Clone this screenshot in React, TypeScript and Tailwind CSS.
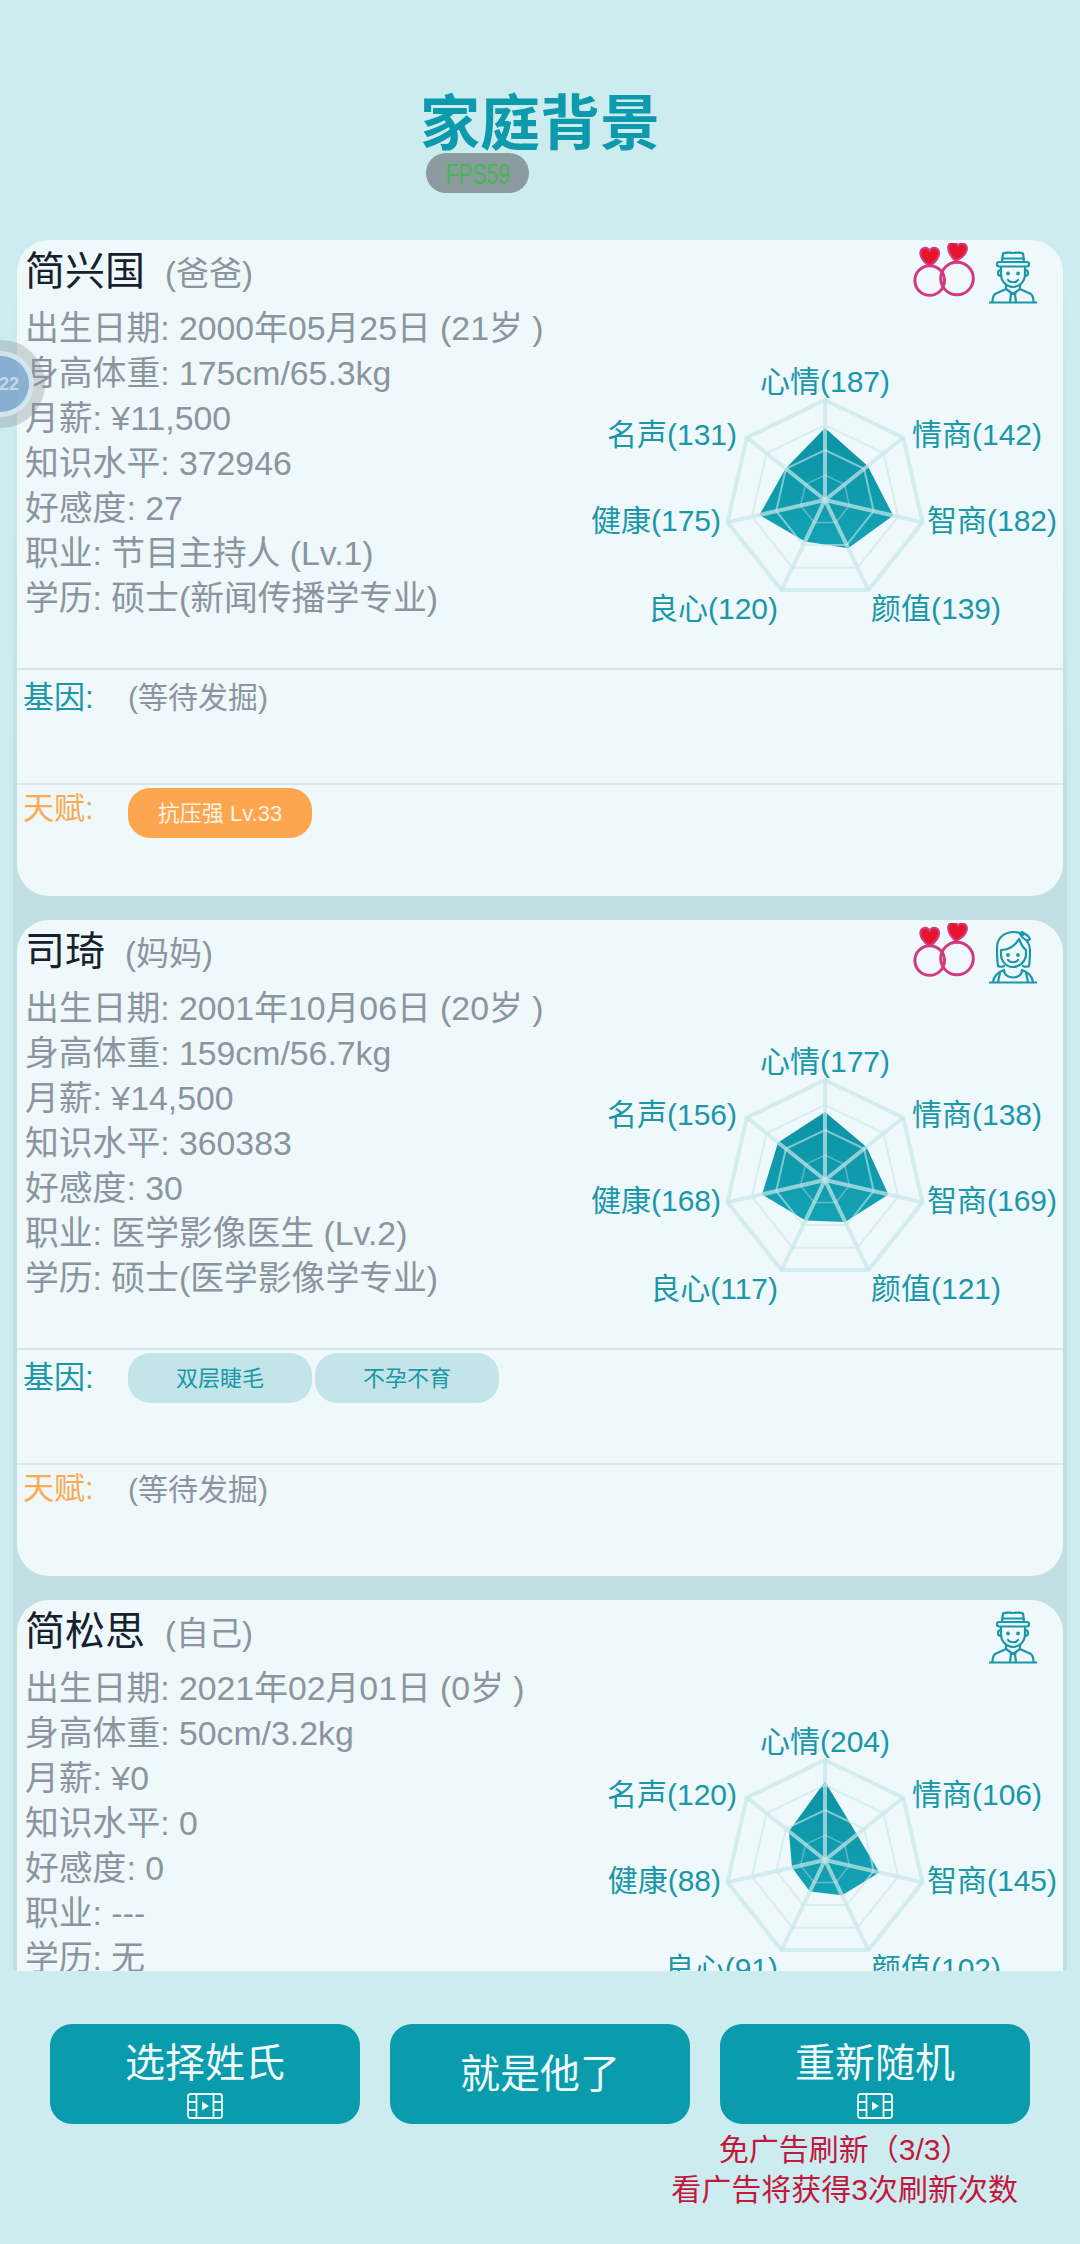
const FONT = 'font-["Liberation_Sans","Noto_Sans_CJK_SC",sans-serif]';

type Member = {
  name: string;
  role: string;
  rings: boolean;
  female?: boolean;
  info: string[];
  stats: number[];
  genes: string[];
  talents: string[];
};

// clockwise, starting from the top of the radar
const STAT_NAMES = ['心情', '情商', '智商', '颜值', '良心', '健康', '名声'];
const LABEL_POS: { x: number; y: number; anchor: 'middle' | 'start' | 'end' }[] = [
  { x: 0, y: -119, anchor: 'middle' },
  { x: 87, y: -66, anchor: 'start' },
  { x: 102, y: 20, anchor: 'start' },
  { x: 46, y: 108, anchor: 'start' },
  { x: -47, y: 108, anchor: 'end' },
  { x: -104, y: 20, anchor: 'end' },
  { x: -88, y: -66, anchor: 'end' },
];

const MEMBERS: Member[] = [
  {
    name: '简兴国',
    role: '(爸爸)',
    rings: true,
    info: ['出生日期: 2000年05月25日 (21岁 )', '身高体重: 175cm/65.3kg', '月薪: ¥11,500', '知识水平: 372946', '好感度: 27', '职业: 节目主持人 (Lv.1)', '学历: 硕士(新闻传播学专业)'],
    stats: [187, 142, 182, 139, 120, 175, 131],
    genes: [],
    talents: ['抗压强 Lv.33'],
  },
  {
    name: '司琦',
    role: '(妈妈)',
    rings: true,
    female: true,
    info: ['出生日期: 2001年10月06日 (20岁 )', '身高体重: 159cm/56.7kg', '月薪: ¥14,500', '知识水平: 360383', '好感度: 30', '职业: 医学影像医生 (Lv.2)', '学历: 硕士(医学影像学专业)'],
    stats: [177, 138, 169, 121, 117, 168, 156],
    genes: ['双层睫毛', '不孕不育'],
    talents: [],
  },
  {
    name: '简松思',
    role: '(自己)',
    rings: false,
    info: ['出生日期: 2021年02月01日 (0岁 )', '身高体重: 50cm/3.2kg', '月薪: ¥0', '知识水平: 0', '好感度: 0', '职业: ---', '学历: 无'],
    stats: [204, 106, 145, 102, 91, 88, 120],
    genes: [],
    talents: [],
  },
];

const point = (i: number, r: number) => {
  const a = ((-90 + (i * 360) / 7) * Math.PI) / 180;
  return `${(Math.cos(a) * r).toFixed(1)},${(Math.sin(a) * r).toFixed(1)}`;
};
const ring = (r: number) => STAT_NAMES.map((_, i) => point(i, r)).join(' ');

const Radar = ({ stats, id }: { stats: number[]; id: number }) => (
  <svg width="480" height="280" viewBox="-242 -140 480 280" className="shrink-0 mt-[120px] overflow-visible">
    <defs>
      <linearGradient id={`poly-${id}`} x1="0" y1="0" x2="0" y2="1">
        <stop offset="0%" stopColor="#0c93a5" />
        <stop offset="100%" stopColor="#13a2b4" />
      </linearGradient>
    </defs>
    <polygon points={stats.map((v, i) => point(i, (v / 260) * 100)).join(' ')} fill={`url(#poly-${id})`} />
    <polygon points={ring(25)} fill="none" stroke="#c7e7ea" strokeOpacity="0.4" strokeWidth="1.5" />
    <polygon points={ring(50)} fill="none" stroke="#c7e7ea" strokeOpacity="0.6" strokeWidth="2" />
    <polygon points={ring(75)} fill="none" stroke="#c7e7ea" strokeOpacity="0.6" strokeWidth="2" />
    <polygon points={ring(100)} fill="none" stroke="#c7e7ea" strokeOpacity="0.7" strokeWidth="4" />
    {STAT_NAMES.map((_, i) => {
      const [x, y] = point(i, 100).split(',');
      return <line key={i} x1="0" y1="0" x2={x} y2={y} stroke="#c7e7ea" strokeOpacity="0.7" strokeWidth="4" />;
    })}
    {STAT_NAMES.map((n, i) => (
      <text
        key={n}
        x={LABEL_POS[i].x}
        y={LABEL_POS[i].y}
        textAnchor={LABEL_POS[i].anchor}
        dominantBaseline="central"
        className="text-[30px] fill-[#1a97a8]"
      >
        {`${n}(${stats[i]})`}
      </text>
    ))}
  </svg>
);

const RingsIcon = () => {
  const heart = 'M0 7 C-10 0 -8 -7 -3.5 -7 C-1.5 -7 0 -5.5 0 -4 C0 -5.5 1.5 -7 3.5 -7 C8 -7 10 0 0 7 Z';
  return (
    <svg width="62" height="54" viewBox="0 0 62 54" fill="none">
      <circle cx="16.7" cy="37.5" r="14.8" stroke="#d23a80" strokeWidth="3" />
      <circle cx="44" cy="35.5" r="16.3" stroke="#d23a80" strokeWidth="3" />
      <path d={heart} transform="translate(16.7 14) scale(1.3)" fill="#e8142c" stroke="#d23a80" strokeWidth="1.6" />
      <path d={heart} transform="translate(44 9) rotate(8) scale(1.3)" fill="#e8142c" stroke="#d23a80" strokeWidth="1.6" />
    </svg>
  );
};

const MaleIcon = () => (
  <svg width="48" height="54" viewBox="0 0 48 54" fill="none" stroke="#1a97a8" strokeWidth="2.2" strokeLinecap="round" strokeLinejoin="round">
    <path d="M13 12 L14 3.5 C18 1.5 20 3 24 3 C28 3 30 1.5 34 3.5 L35 12" />
    <path d="M13 8.5 H35" />
    <rect x="8" y="12" width="32" height="4.5" rx="2.2" />
    <path d="M12 17 V24 C12 32 18 37 24 37 C30 37 36 32 36 24 V17" />
    <path d="M12 20 C8 20 8 26 12 26 M36 20 C40 20 40 26 36 26" />
    <path d="M19 30 C21 33 27 33 29 30" />
    <circle cx="19" cy="23.5" r="0.8" fill="#1a97a8" />
    <circle cx="29" cy="23.5" r="0.8" fill="#1a97a8" />
    <path d="M17 35 V39 L6 44 C4 46 3.5 49 3.5 52 M31 35 V39 L42 44 C44 46 44.5 49 44.5 52" />
    <path d="M17 39 L24 44 L31 39 M22 44 L21 52 M26 44 L27 52 M21.5 44 H26.5" />
    <path d="M0.5 52.5 H47.5" />
  </svg>
);

const FemaleIcon = () => (
  <svg width="48" height="54" viewBox="0 0 48 54" fill="none" stroke="#1a97a8" strokeWidth="2.2" strokeLinecap="round" strokeLinejoin="round">
    <path d="M9 36 C8 30 8 24 8 18 C8 8 15 2 25 2 C29 2 32 3 34 5 M38 11 C40 14 41 16 41 20 C41 26 41 30 40 36 C38 37 36 37 34 36" />
    <path d="M9 36 C11 37 13 37 15 36" />
    <path d="M12 20 C20 20 26 16 30 9 C32 14 34 18 37 20 V24 C37 31 31 37 24 37 C17 37 12 31 12 24 Z" />
    <path d="M33 2 L39 6 L41 9 L38 11 L33 7 L31 4 Z" />
    <path d="M19 30 C21 33 27 33 29 30" />
    <circle cx="19" cy="25" r="0.8" fill="#1a97a8" />
    <circle cx="29" cy="25" r="0.8" fill="#1a97a8" />
    <path d="M15 40 C9 42 5 46 4 52 M33 40 C39 42 43 46 44 52 M15 40 C15 50 33 50 33 40 M11 43 L9 52 M37 43 L39 52" />
    <path d="M0.5 52.5 H47.5" />
  </svg>
);

const FilmIcon = () => (
  <svg width="36" height="26" viewBox="0 0 36 26" fill="none" stroke="#eefafb" strokeWidth="1.8" className="shrink-0">
    <rect x="1" y="1" width="34" height="24" rx="2.5" />
    <path d="M9.5 1 V25 M26.5 1 V25 M1 9 H9.5 M1 17 H9.5 M26.5 9 H35 M26.5 17 H35" />
    <path d="M15 8.5 L22 13 L15 17.5 Z" fill="#eefafb" stroke="none" />
  </svg>
);

const Pending = () => <span className="text-[30px] leading-[44px] text-[#8b959f]">(等待发掘)</span>;

const Card = ({ m, id }: { m: Member; id: number }) => (
  <div className="relative h-[656px] shrink-0 flex flex-col rounded-[32px] bg-[#eff8fa] overflow-hidden">
    <div className="absolute top-[3px] right-[26px] flex items-start">
      {m.rings && <RingsIcon />}
      <div className="ml-[14px] mt-[7px]">{m.female ? <FemaleIcon /> : <MaleIcon />}</div>
    </div>

    <div className="h-[428px] shrink-0 flex justify-between">
      <div className="pl-[8px]">
        <div className="h-[66px] flex items-baseline leading-[63px]">
          <span className="text-[40px] text-[#17212e]">{m.name}</span>
          <span className="ml-[20px] text-[33px] text-[#8b959f]">{m.role}</span>
        </div>
        {m.info.map((line) => (
          <div key={line} className="text-[33.8px] leading-[45px] whitespace-nowrap text-[#8b959f]">
            {line}
          </div>
        ))}
      </div>
      <Radar stats={m.stats} id={id} />
    </div>

    <div className="h-[115px] shrink-0 flex border-t-2 border-[#d6e6ea] pl-[6px]">
      <span className="w-[105px] shrink-0 pt-[6px] text-[31px] leading-[44px] text-[#1a97a8]">基因:</span>
      {m.genes.length === 0 ? (
        <div className="pt-[6px]">
          <Pending />
        </div>
      ) : (
        <div className="flex gap-[3px] pt-[3px]">
          {m.genes.map((g) => (
            <span key={g} className="w-[184px] h-[50px] flex items-center justify-center rounded-[22px] bg-[#c3e5e9] text-[22px] text-[#1a97a8]">
              {g}
            </span>
          ))}
        </div>
      )}
    </div>

    <div className="flex-1 flex border-t-2 border-[#d6e6ea] pl-[6px]">
      <span className="w-[105px] shrink-0 pt-[2px] text-[31px] leading-[44px] text-[#f9aa52]">天赋:</span>
      {m.talents.length === 0 ? (
        <div className="pt-[3px]">
          <Pending />
        </div>
      ) : (
        <div className="flex gap-[3px] pt-[3px]">
          {m.talents.map((t) => (
            <span key={t} className="w-[184px] h-[50px] flex items-center justify-center rounded-[22px] bg-[#fea64f] text-[22px] text-[#fdf3e6]">
              {t}
            </span>
          ))}
        </div>
      )}
    </div>
  </div>
);

const ActionButton = ({ label, ad, width }: { label: string; ad?: boolean; width: string }) => (
  <button className={`${width} h-[100px] shrink-0 flex flex-col items-center rounded-[22px] bg-[#0a9bad] text-[40px] text-[#eefafb] ${ad ? 'pt-[14px]' : 'justify-center'}`}>
    <span className="leading-[50px]">{label}</span>
    {ad && (
      <span className="mt-[5px]">
        <FilmIcon />
      </span>
    )}
  </button>
);

export default function App() {
  return (
    <div className={`relative w-[1080px] h-[2244px] overflow-hidden flex flex-col bg-[#cdecef] ${FONT}`}>
      <div className="h-[240px] shrink-0 flex justify-center">
        <h1 className="mt-[85px] text-[60px] leading-[80px] font-bold text-[#0e9aad]">家庭背景</h1>
      </div>

      <div className="absolute left-[426px] top-[153px] w-[103px] h-[40px] flex items-center justify-center overflow-hidden rounded-[20px] bg-[#8b9ba0]">
        <span className="scale-x-70 text-[30px] font-light text-[#45b850]">FPS59</span>
      </div>

      {/* the lists' backing only shows in the gaps, it fades in from the top */}
      <div className="mx-[13px] h-[1731px] shrink-0 overflow-hidden px-[4px] flex flex-col gap-[24px] bg-gradient-to-b from-[#cdecef] to-[#c2e0e3] to-[35%]">
        {MEMBERS.map((m, i) => (
          <Card key={m.name} m={m} id={i} />
        ))}
      </div>

      <div className="mt-[53px] px-[50px] flex gap-[30px]">
        <ActionButton label="选择姓氏" ad width="w-[310px]" />
        <ActionButton label="就是他了" width="w-[300px]" />
        <ActionButton label="重新随机" ad width="w-[310px]" />
      </div>
      <div className="self-end mr-[62px] mt-[6px] text-center text-[30px] leading-[40px] text-[#c2183e]">
        <div>免广告刷新（3/3）</div>
        <div>看广告将获得3次刷新次数</div>
      </div>

      {/* floating debug ball stuck on the left edge */}
      <div className="absolute left-[-43px] top-[340px] w-[88px] h-[88px] flex items-center justify-center rounded-full bg-[#8a9696]/35">
        <div className="w-[66px] h-[66px] flex items-center justify-end rounded-full border-[5px] border-[#e6f1f4]/80 bg-[#7fa9d2]/85 pr-[10px]">
          <span className="text-[18px] font-bold text-[#d6e4ef]/80">22</span>
        </div>
      </div>
    </div>
  );
}
